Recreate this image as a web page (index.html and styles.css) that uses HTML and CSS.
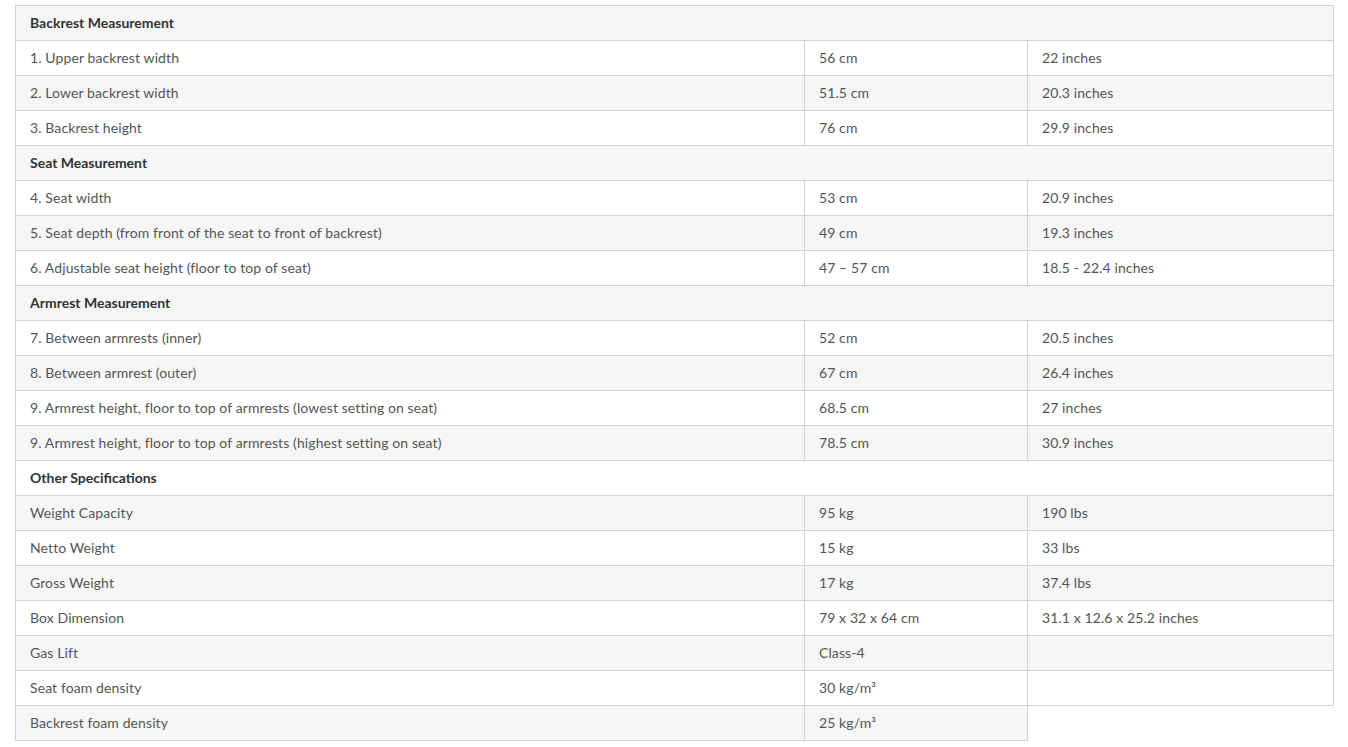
FILE: index.html
```html
<!DOCTYPE html>
<html>
<head>
<meta charset="utf-8">
<link rel="stylesheet" href="styles.css">
</head>
<body>
<table class="spec">
  <colgroup><col class="c1"><col class="c2"><col class="c3"></colgroup>
  <tbody>
    <tr><th colspan="3">Backrest Measurement</th></tr>
    <tr><td>1. Upper backrest width</td><td>56 cm</td><td>22 inches</td></tr>
    <tr><td>2. Lower backrest width</td><td>51.5 cm</td><td>20.3 inches</td></tr>
    <tr><td>3. Backrest height</td><td>76 cm</td><td>29.9 inches</td></tr>
    <tr><th colspan="3">Seat Measurement</th></tr>
    <tr><td>4. Seat width</td><td>53 cm</td><td>20.9 inches</td></tr>
    <tr><td>5. Seat depth (from front of the seat to front of backrest)</td><td>49 cm</td><td>19.3 inches</td></tr>
    <tr><td>6. Adjustable seat height (floor to top of seat)</td><td>47 – 57 cm</td><td>18.5 - 22.4 inches</td></tr>
    <tr><th colspan="3">Armrest Measurement</th></tr>
    <tr><td>7. Between armrests (inner)</td><td>52 cm</td><td>20.5 inches</td></tr>
    <tr><td>8. Between armrest (outer)</td><td>67 cm</td><td>26.4 inches</td></tr>
    <tr><td>9. Armrest height, floor to top of armrests (lowest setting on seat)</td><td>68.5 cm</td><td>27 inches</td></tr>
    <tr><td>9. Armrest height, floor to top of armrests (highest setting on seat)</td><td>78.5 cm</td><td>30.9 inches</td></tr>
    <tr><th colspan="3">Other Specifications</th></tr>
    <tr><td>Weight Capacity</td><td>95 kg</td><td>190 lbs</td></tr>
    <tr><td>Netto Weight</td><td>15 kg</td><td>33 lbs</td></tr>
    <tr><td>Gross Weight</td><td>17 kg</td><td>37.4 lbs</td></tr>
    <tr><td>Box Dimension</td><td>79 x 32 x 64 cm</td><td>31.1 x 12.6 x 25.2 inches</td></tr>
    <tr><td>Gas Lift</td><td>Class-4</td><td></td></tr>
    <tr><td>Seat foam density</td><td>30 kg/m³</td><td></td></tr>
    <tr><td>Backrest foam density</td><td>25 kg/m³</td></tr>
  </tbody>
</table>
</body>
</html>
```
FILE: styles.css
```css
html, body {
  margin: 0;
  padding: 0;
  background: #ffffff;
}
body {
  padding: 5px 15px;
  font-family: "Lato", "Open Sans", "Liberation Sans", sans-serif;
  font-size: 14px;
  color: #555555;
}
.spec {
  border-collapse: collapse;
  table-layout: fixed;
  width: 1318px;
}
.spec .c1 { width: 789px; }
.spec .c2 { width: 223px; }
.spec .c3 { width: 306px; }
.spec th,
.spec td {
  border: 1px solid #d2d2d2;
  height: 35px;
  padding: 0 14px;
  text-align: left;
  vertical-align: middle;
  line-height: 20px;
  box-sizing: border-box;
}
.spec th {
  font-weight: 700;
  color: #333333;
}
.spec td {
  font-weight: 400;
  letter-spacing: 0.1px;
}
.spec tr:nth-child(odd) {
  background: #f6f6f6;
}
.spec tr:nth-child(even) {
  background: #ffffff;
}
```
